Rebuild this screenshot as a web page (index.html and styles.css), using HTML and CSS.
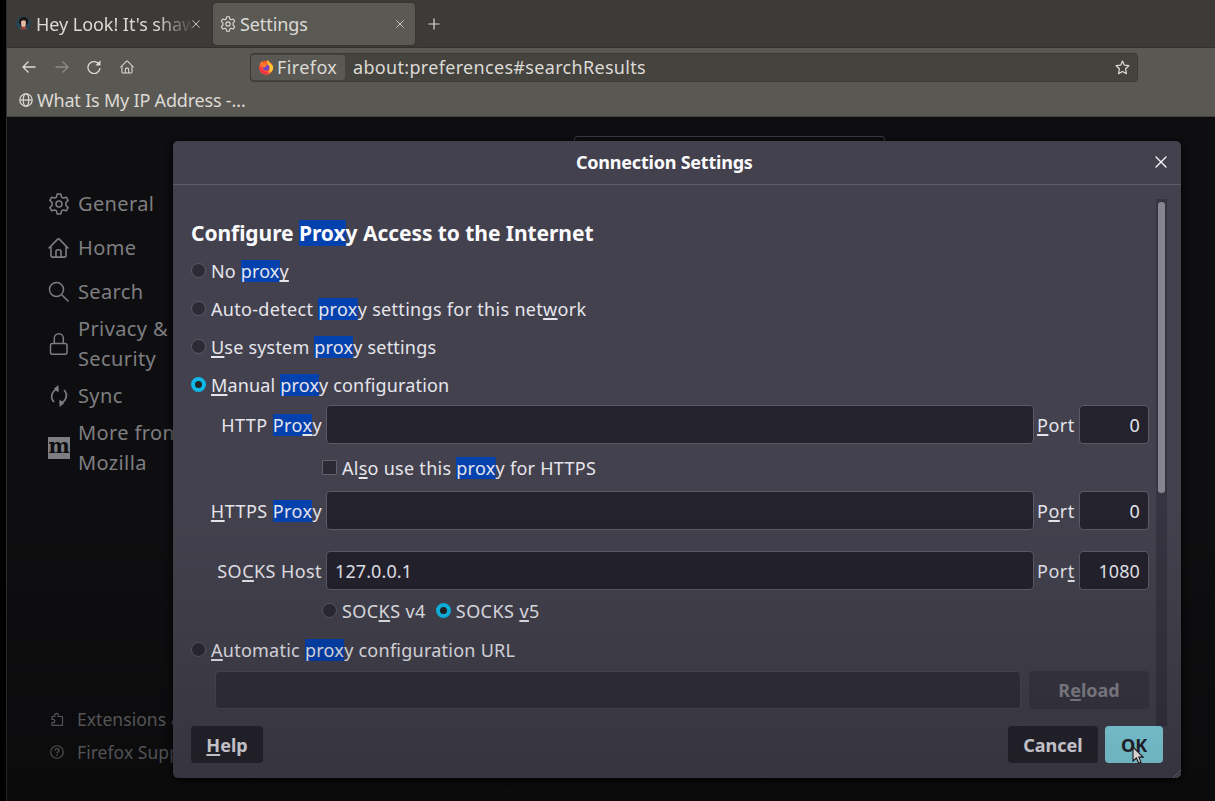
FILE: index.html
```html
<!DOCTYPE html>
<html lang="en">
<head>
<meta charset="utf-8">
<title>Settings</title>
<link rel="stylesheet" href="styles.css">
</head>
<body>
<svg class="defs" width="0" height="0">
  <defs>
    <symbol id="gear" viewBox="0 0 20 20"><path d="M8.300 1h3.400l.6 2.700 1.600.9 2.700-.8 1.700 2.900-2 1.900v2.800l2 1.900-1.700 2.900-2.700-.8-1.600.9-.6 2.700H8.300l-.6-2.700-1.600-.9-2.700.8-1.700-2.900 2-1.900V8.600l-2-1.900 1.700-2.900 2.700.8 1.600-.9z" fill="none" stroke="currentColor" stroke-width="1.400" stroke-linejoin="round"/><circle cx="10" cy="10" r="2.700" fill="none" stroke="currentColor" stroke-width="1.400"/></symbol>
    <symbol id="home" viewBox="0 0 20 20"><path d="M1 10 9 1.800q1-.9 2 0L19 10M2.800 8.500v8.500q0 1.700 1.700 1.700h11q1.700 0 1.700-1.700V8.500M7.600 18.500v-5q0-1.900 1.900-1.900h1q1.900 0 1.900 1.900v5" fill="none" stroke="currentColor" stroke-width="1.500" stroke-linecap="round"/></symbol>
    <symbol id="close" viewBox="0 0 12 12"><path d="M1 1l10 10M11 1 1 11" fill="none" stroke="currentColor" stroke-width="1.300" stroke-linecap="round"/></symbol>
  </defs>
</svg>
<div class="window">
  <div class="tabs">
    <div class="tab tab-first">
      <svg class="avatar" viewBox="0 0 16 16"><circle cx="8" cy="8" r="7.500" fill="#24465c"/><path d="M3 7q0-6 6-6 5 1 4 6l-2 3H5z" fill="#1b1716"/><path d="M5.500 5.500q3-2 5 0v4q-1 3-2.500 3t-2.500-3z" fill="#e5b9a0"/><path d="M4 13q4-3 8 0-4 3.500-8 0" fill="#97402b"/></svg>
      <span class="tab-title fade">Hey Look! It's shaw</span>
      <svg class="x9"><use href="#close"/></svg>
    </div>
    <div class="tab tab-active">
      <svg class="i16"><use href="#gear"/></svg>
      <span class="tab-title">Settings</span>
      <svg class="x9"><use href="#close"/></svg>
    </div>
    <svg class="plus" viewBox="0 0 12 12"><path d="M6 .5v11M.5 6h11" stroke="currentColor" stroke-width="1.200"/></svg>
  </div>
  <div class="toolbar">
    <div class="nav">
      <svg class="i14" viewBox="0 0 14 14"><path d="M13.500 7H1M6.500 1.500 1 7l5.500 5.500" fill="none" stroke="currentColor" stroke-width="1.300"/></svg>
      <svg class="i14 dim" viewBox="0 0 14 14"><path d="M.5 7H13M7.500 1.500 13 7l-5.500 5.500" fill="none" stroke="currentColor" stroke-width="1.300"/></svg>
      <svg class="i14" viewBox="0 0 14 14"><path d="M12 4.200A6 6 0 1 0 13 8" fill="none" stroke="currentColor" stroke-width="1.300"/><path d="M13.500.3v5.200H8.300z" fill="currentColor"/></svg>
      <svg class="i14"><use href="#home"/></svg>
    </div>
    <div class="url">
      <div class="identity">
        <svg class="fox" viewBox="0 0 16 16"><circle cx="8" cy="8.700" r="7" fill="#ff5a2c"/><path d="M9 1q2 1 3 3.300 4 2 3 6-2 5-7 5 5-3 3-7-2-3-2-7.300z" fill="#ffc535"/><path d="M1 7q0 6 5 8 5 1 7-2-5 2-8-2z" fill="#f0304e"/><circle cx="8.300" cy="8.500" r="3.100" fill="#7441c9"/><path d="M2 5q1-2 2-3l1 2q3 0 4 2L7 8.500 4.500 7.500z" fill="#ff7a2a"/></svg>
        <span class="ident-text">Firefox</span>
      </div>
      <span class="address">about:preferences#searchResults</span>
      <svg class="star" viewBox="0 0 16 16"><path d="m8 1.200 2 4.300 4.800.6-3.500 3.200.9 5.200L8 12.200l-4.200 2.300.9-5.200L1.200 6.100 6 5.500z" fill="none" stroke="currentColor" stroke-width="1.300" stroke-linejoin="round"/></svg>
    </div>
  </div>
  <div class="bookmarks">
    <svg class="i14" viewBox="0 0 14 14"><g fill="none" stroke="currentColor" stroke-width="1.200"><circle cx="7" cy="7" r="6.200"/><ellipse cx="7" cy="7" rx="2.800" ry="6.200"/><path d="M1 7h12"/></g></svg>
    <span class="bookmark-text">What Is My IP Address -…</span>
  </div>
  <div class="page">
    <div class="sidebar">
      <div class="cat"><svg class="i22"><use href="#gear"/></svg><span>General</span></div>
      <div class="cat"><svg class="i22 home-ic"><use href="#home"/></svg><span>Home</span></div>
      <div class="cat"><svg class="i22" viewBox="0 0 22 22"><path d="M14 14 20.500 20.500" stroke="currentColor" stroke-width="1.600"/><circle cx="8.500" cy="8.500" r="7" fill="none" stroke="currentColor" stroke-width="1.500"/></svg><span>Search</span></div>
      <div class="cat two"><svg class="i22" viewBox="0 0 22 22"><g fill="none" stroke="currentColor" stroke-width="1.500"><rect x="2.500" y="10.500" width="16.500" height="10.700" rx="2"/><path d="M6.300 10.500V5.300a4.500 4.500 0 0 1 9 0v5.200"/></g></svg><span>Privacy &amp;<br>Security</span></div>
      <div class="cat"><svg class="i22" viewBox="0 0 22 22"><g fill="none" stroke="currentColor" stroke-width="1.700"><path d="M6 17A7.600 7.600 0 0 1 10.500 4M16 5a7.600 7.600 0 0 1-4.500 13"/></g><path d="M10.500 0v7.500L5.800 3.800zM11.500 14.500V22l4.700-3.700z" fill="currentColor"/></svg><span>Sync</span></div>
      <div class="cat two"><span class="moz">m</span><span>More from<br>Mozilla</span></div>
    </div>
    <div class="links">
      <div class="link"><svg class="i14" viewBox="0 0 14 14"><path d="M2 4.500h2.800V3a1.700 1.700 0 0 1 3.400 0v1.500h4.300v8.800H2v-2.600h1.200a1.600 1.600 0 0 0 0-3.300H2z" fill="none" stroke="currentColor" stroke-width="1.200" stroke-linejoin="round"/></svg><span>Extensions &amp; Themes</span></div>
      <div class="link"><svg class="i14" viewBox="0 0 14 14"><circle cx="7" cy="7" r="6.300" fill="none" stroke="currentColor" stroke-width="1.100"/><path d="M5 5.600q0-2 2-2t2 1.800q0 1-1.200 1.600-.8.500-.8 1.500" fill="none" stroke="currentColor" stroke-width="1.200"/><circle cx="7" cy="10.300" r=".8" fill="currentColor"/></svg><span>Firefox Support</span></div>
    </div>
  </div>
</div>
<div class="searchbox"></div>
<div class="dialog">
  <div class="dialog-head"><span class="dialog-title">Connection Settings</span><svg class="dialog-x"><use href="#close"/></svg></div>
  <div class="dialog-body">
    <div class="form">
      <div class="row heading"><span class="t-head">Configure <mark>Prox</mark>y Access to the Internet</span></div>
      <div class="row"><i class="radio"></i><span class="t-no">No <mark>prox</mark><u>y</u></span></div>
      <div class="row"><i class="radio"></i><span class="t-auto">Auto-detect <mark>prox</mark>y settings for this net<u>w</u>ork</span></div>
      <div class="row"><i class="radio"></i><span class="t-sys"><u>U</u>se system <mark>prox</mark>y settings</span></div>
      <div class="row"><i class="radio on"></i><span class="t-man"><u>M</u>anual <mark>prox</mark>y configuration</span></div>
      <div class="field first"><label>HTTP <mark>Pro<u>x</u></mark>y</label><div class="input"></div><span class="port"><u>P</u>ort</span><div class="input num">0</div></div>
      <div class="row check"><i class="box"></i><span class="t-also">Al<u>s</u>o use this <mark>prox</mark>y for HTTPS</span></div>
      <div class="field"><label><u>H</u>TTPS <mark>Prox</mark>y</label><div class="input"></div><span class="port">P<u>o</u>rt</span><div class="input num">0</div></div>
      <div class="field socks"><label>SO<u>C</u>KS Host</label><div class="input">127.0.0.1</div><span class="port">Por<u>t</u></span><div class="input num">1080</div></div>
      <div class="row versions"><i class="radio"></i><span class="t-ver">SOC<u>K</u>S v4</span><i class="radio on"></i><span class="t-ver">SOCKS <u>v</u>5</span></div>
      <div class="row"><i class="radio"></i><span class="t-url"><u>A</u>utomatic <mark>prox</mark>y configuration URL</span></div>
      <div class="urlrow"><div class="input off"></div><div class="btn reload"><span>R<u>e</u>load</span></div></div>
    </div>
    <div class="track"><div class="thumb"></div></div>
  </div>
  <div class="dialog-foot"><div class="btn help"><span><u>H</u>elp</span></div><div class="btn cancel"><span>Cancel</span></div><div class="btn ok"><span>OK</span></div></div>
  <svg class="grip" viewBox="0 0 10 10"><path d="M1 10 10 1M5 10l5-5" stroke="#74737c" stroke-width="1"/></svg>
</div>
<div class="shade"></div>
<svg class="cursor" viewBox="0 0 12 18"><path d="M1 1v14l3.400-3 2.300 5.200 2.300-1-2.200-5.100H11z" fill="#d8d2d2" stroke="#17171c" stroke-width="1.100"/></svg>
</body>
</html>
```
FILE: styles.css
```css
* { box-sizing: border-box; }
body {
  margin: 0;
  width: 1215px;
  height: 801px;
  overflow: hidden;
  position: relative;
  background: #000;
  font-family: "Noto Sans", "Open Sans", sans-serif;
  font-size: 18px;
  line-height: 24px;
  color: #e6e5ec;
  white-space: nowrap;
}
svg { display: block; flex: none; }
.defs { position: absolute; }
u { text-decoration: underline; text-decoration-thickness: 2px; text-underline-offset: 2px; text-decoration-skip-ink: none; }
mark { color: inherit; background: linear-gradient(#0341ae, #0341ae) no-repeat center / 100% 22px; }

.window { margin-left: 6px; height: 801px; border-left: 1px solid #2f2e2e; display: flex; flex-direction: column; }
.tabs { height: 48px; background: #3c3b37; border-bottom: 1px solid #32312e; display: flex; align-items: center; color: #dcdad5; }
.tab { display: flex; align-items: center; height: 42px; }
.tab-first { width: 206px; padding: 0 13px 0 9px; }
.avatar { width: 15px; height: 15px; margin-right: 5px; }
.tab-title { flex: 1; letter-spacing: -.1px; }
.fade { margin-right: -12px; letter-spacing: -.05px; mask-image: linear-gradient(90deg, #000 72%, transparent 94%); }
.tab-active { width: 202px; background: #5a5954; border-radius: 4px; padding: 0 11px 0 7px; box-shadow: 0 0 2px #2b2a27; }
.tab-active .tab-title { margin-left: 4px; }
.i16 { width: 16px; height: 16px; }
.i14 { width: 14px; height: 14px; }
.x9 { width: 8px; height: 8px; overflow: visible; }
.plus { width: 12px; height: 12px; margin-left: 13px; }
.toolbar { height: 36px; background: #5a5853; display: flex; align-items: center; color: #dcdad5; }
.nav { width: 243px; padding-left: 15px; margin-top: 1px; display: flex; gap: 18.500px; }
.dim { opacity: .4; }
.url { width: 888px; height: 29px; margin-top: 2px; background: #45433e; border: 1px solid #3b3935; border-radius: 4px; display: flex; align-items: center; }
.identity { width: 94px; height: 25px; padding-left: 7px; background: #5a5853; border-radius: 3px; display: flex; align-items: center; }
.fox { width: 16px; height: 16px; margin-right: 3px; }
.ident-text { letter-spacing: .4px; }
.address { margin-left: 8px; flex: 1; letter-spacing: .32px; }
.identity span, .address { margin-top: -1px; }
.star { width: 15px; height: 15px; margin-right: 7px; }
.bookmarks { height: 33px; padding-left: 12px; background: #5a5853; border-bottom: 1px solid #454440; display: flex; align-items: center; gap: 4px; color: #dcdad5; letter-spacing: -.2px; }
.page { flex: 1; background: #0e0e10; color: #7e7e82; display: flex; flex-direction: column; justify-content: space-between; }
.sidebar { padding: 65px 0 0 41px; font-size: 20px; line-height: 30px; letter-spacing: .38px; }
.cat { height: 44px; display: flex; align-items: center; gap: 8px; }
.i22 { width: 22px; height: 22px; }
.home-ic { padding: 0 1px 0 0; }
.two { height: 60px; }
.moz { width: 22px; height: 22px; background: #7e7e82; color: #0e0e10; font: bold 20px/19px "DejaVu Serif", serif; text-align: center; letter-spacing: 0; }
.links { padding: 0 0 33px 43px; color: #626266; font-size: 17.500px; letter-spacing: .05px; }
.link { height: 33px; display: flex; align-items: center; gap: 13px; }

.searchbox { position: absolute; left: 574px; top: 136px; width: 311px; height: 20px; border: 1px solid #3c3b42; border-radius: 3px; }
.dialog { position: absolute; left: 173px; top: 141px; width: 1008px; height: 637px; background: #42414d; border-radius: 5px; box-shadow: 0 2px 8px #000; display: flex; flex-direction: column; }
.dialog-head { height: 44px; border-bottom: 1px solid #5d5c68; display: flex; align-items: center; padding: 0 14px 1px 403px; color: #fbfbfe; font-weight: bold; letter-spacing: -.22px; }
.dialog-title { flex: 1; }
.dialog-x { width: 12px; height: 12px; }
.dialog-body { height: 541px; display: flex; }
.form { width: 983px; padding: 29px 7px 0 18px; }
.row { height: 38px; display: flex; align-items: center; }
.heading { font-size: 21px; font-weight: bold; color: #fbfbfe; letter-spacing: -.06px; }
.heading mark { background-size: 100% 26px; }
.t-no { letter-spacing: .15px; }
.t-auto { letter-spacing: .31px; }
.t-sys { letter-spacing: .19px; }
.t-man { letter-spacing: .16px; }
.t-also { letter-spacing: .27px; }
.t-ver { letter-spacing: .42px; }
.t-url { letter-spacing: .25px; }
.radio { width: 15px; height: 15px; border-radius: 50%; border: 1px solid #5c5b67; background: #2b2a35; margin: -1px 5px 0 0; flex: none; }
.on { border: 4px solid #0fb8e6; background: #222; }
.box { width: 15px; height: 15px; border: 1px solid #62616c; background: #2b2a35; margin: -1px 5px 0 0; border-radius: 1px; }
.field { height: 39px; display: flex; align-items: center; }
.first { margin-top: 1px; }
.socks { margin-top: 21px; }
.field label { width: 131px; text-align: right; margin-right: 4px; letter-spacing: .43px; }
.input { width: 708px; height: 39px; background: #23222d; border: 1px solid #5b5a66; border-radius: 4px; padding: 0 8px; display: flex; align-items: center; letter-spacing: .1px; }
.port { width: 42px; margin-left: 3px; letter-spacing: .5px; }
.num { width: 70px; justify-content: flex-end; }
.check { height: 47px; padding-left: 131px; }
.versions { height: 41px; padding-left: 131px; }
.versions .on { margin-left: 10px; }
.urlrow { display: flex; padding: 2px 0 0 24px; gap: 8px; }
.off { width: 806px; height: 38px; background: #32313c; border-color: #4b4a55; }
.btn { height: 37px; display: flex; align-items: center; justify-content: center; border-radius: 4px; background: #262530; font-weight: bold; }
.reload { width: 120px; height: 38px; background: #383743; color: #84838c; }
.track { width: 11px; height: 527px; margin-top: 14px; padding: 3px 2px; background: #353440; }
.thumb { height: 291px; border-radius: 3px; background: #85848f; width: 7px; }
.dialog-foot { display: flex; padding: 0 18px; }
.help { width: 72px; }
.cancel { width: 90px; margin-left: auto; }
.ok { width: 58px; margin-left: 7px; background: #86d8e8; color: #24242e; }
.grip { position: absolute; right: 0; bottom: 0; width: 9px; height: 9px; }
.shade { position: absolute; left: 0; right: 0; top: 500px; bottom: 0; background: linear-gradient(rgba(0,0,0,0), rgba(0,0,0,.2)); }
.cursor { position: absolute; left: 1132px; top: 746px; width: 12px; height: 18px; }
```
